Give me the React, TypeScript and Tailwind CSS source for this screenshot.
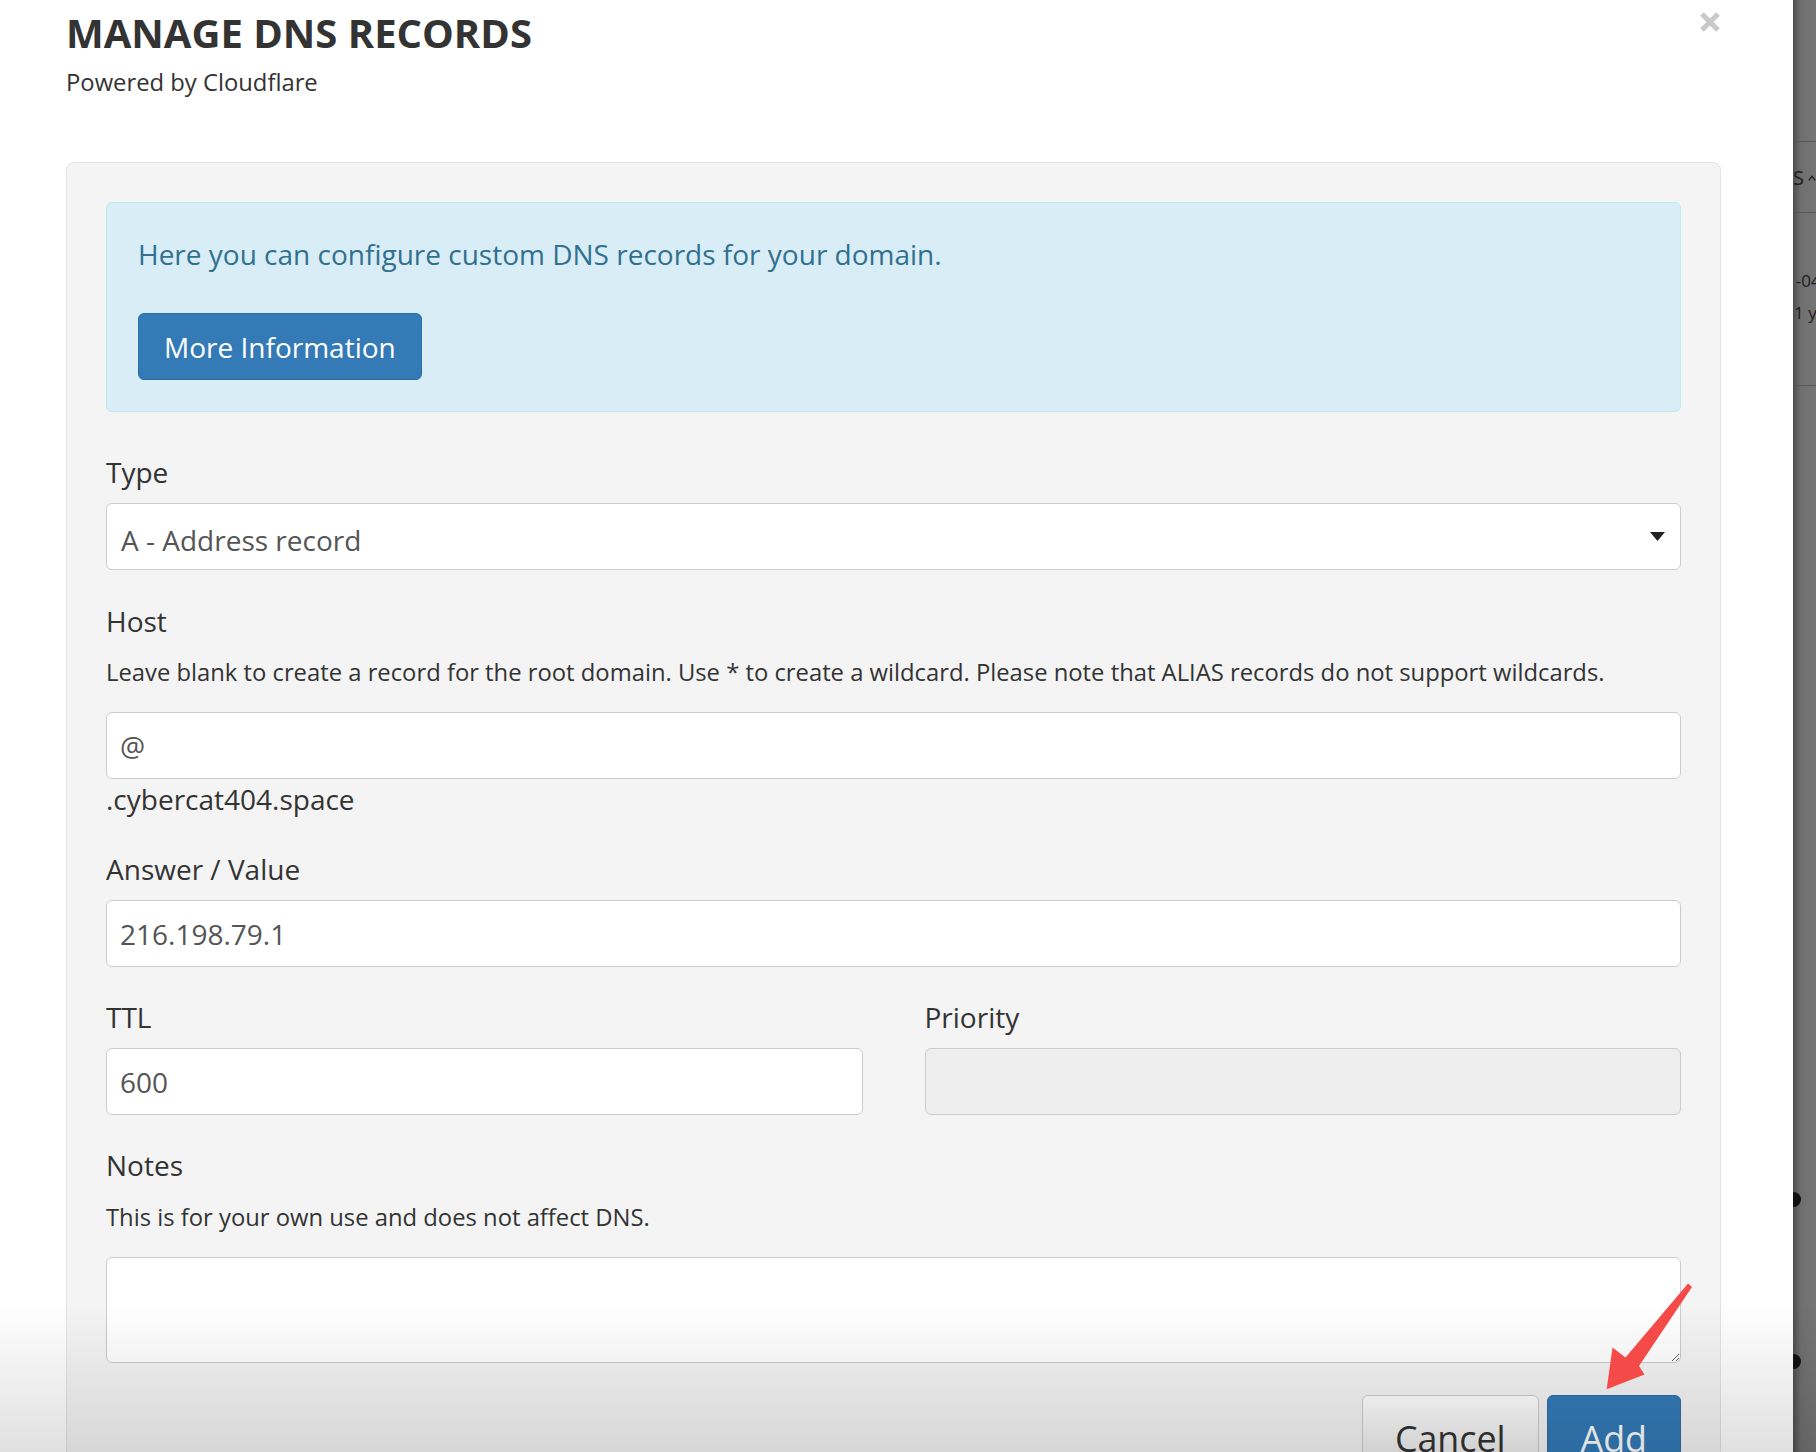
import React from "react";

function Label({ children, className = "" }: { children: React.ReactNode; className?: string }) {
  return <div className={`text-[28px] leading-[40px] text-[#333] ${className}`}>{children}</div>;
}

function Help({ children, className = "" }: { children: React.ReactNode; className?: string }) {
  return <div className={`text-[23.8px] leading-[34px] text-[#333] ${className}`}>{children}</div>;
}

function TextInput({ value, className = "", disabled = false }: { value: string; className?: string; disabled?: boolean }) {
  return (
    <input
      readOnly
      disabled={disabled}
      defaultValue={value}
      className={`block h-[67px] w-full rounded-[6px] border border-[#ccc] px-[13px] text-[28px] text-[#555] outline-none ${
        disabled ? "bg-[#eee]" : "bg-white"
      } ${className}`}
    />
  );
}

export default function App() {
  return (
    <div className="relative flex h-[1452px] w-[1816px] overflow-hidden bg-white font-['Open_Sans',sans-serif] text-[#333]">
      {/* Modal */}
      <div className="w-[1793px] shrink-0 bg-white pl-[66px] pr-[72px]">
        <header className="flex items-start justify-between">
          <div className="pt-[10px]">
            <h1 className="text-[40px] font-bold uppercase leading-[45px] text-[#333]">Manage DNS Records</h1>
            <p className="mt-[11px] text-[23.8px] leading-[33px] text-[#333]">Powered by Cloudflare</p>
          </div>
          <svg className="mr-[1px] mt-[12px]" width="20" height="20" viewBox="0 0 20 20">
            <path d="M2 2 L18 18 M18 2 L2 18" stroke="#c9c9c9" strokeWidth="5" strokeLinecap="butt" />
          </svg>
        </header>

        <div className="mt-[63px] rounded-[8px] border border-[#e3e3e3] bg-[#f4f4f4] px-[39px] pb-[40px] pt-[39px]">
          {/* Info alert */}
          <div className="rounded-[6px] border border-[#bce8f1] bg-[#d9edf7] px-[31px] pb-[31px] pt-[31px]">
            <p className="text-[28px] leading-[40px] text-[#31708f]">
              Here you can configure custom DNS records for your domain.
            </p>
            <button className="mt-[39px] h-[67px] rounded-[6px] border border-[#2e6da4] bg-[#337ab7] px-[25px] text-[28px] text-white">
              More Information
            </button>
          </div>

          {/* Type */}
          <Label className="mt-[40px]">Type</Label>
          <div className="mt-[11px] flex h-[67px] items-center justify-between rounded-[6px] border border-[#ccc] bg-white pl-[14px] pr-[15px]">
            <span className="pt-[7px] text-[28px] text-[#555]">A - Address record</span>
            <svg width="15" height="9" viewBox="0 0 15 9">
              <path d="M0 0 H15 L7.5 9 Z" fill="#222" />
            </svg>
          </div>

          {/* Host */}
          <Label className="mt-[31px]">Host</Label>
          <Help className="mt-[14px]">
            Leave blank to create a record for the root domain. Use * to create a wildcard. Please note that ALIAS records do not support wildcards.
          </Help>
          <TextInput value="@" className="mt-[23px]" />
          <Label>.cybercat404.space</Label>

          {/* Answer */}
          <Label className="mt-[30px]">Answer / Value</Label>
          <TextInput value="216.198.79.1" className="mt-[11px]" />

          {/* TTL / Priority */}
          <div className="mt-[30px] grid grid-cols-2 gap-x-[62px]">
            <div>
              <Label>TTL</Label>
              <TextInput value="600" className="mt-[11px]" />
            </div>
            <div>
              <Label>Priority</Label>
              <TextInput value="" disabled className="mt-[11px]" />
            </div>
          </div>

          {/* Notes */}
          <Label className="mt-[30px]">Notes</Label>
          <Help className="mt-[15px]">This is for your own use and does not affect DNS.</Help>
          <textarea
            readOnly
            className="mt-[23px] block h-[106px] w-full rounded-[6px] border border-[#ccc] bg-white px-[13px] text-[28px] text-[#555] outline-none"
          />

          {/* Buttons */}
          <div className="mt-[32px] flex justify-end gap-[8px]">
            <button className="rounded-[6px] border border-[#ccc] bg-linear-to-b from-white to-[#e6e6e6] px-[32px] py-[19px] text-[35.8px] leading-[47px] text-[#333]">
              Cancel
            </button>
            <button className="rounded-[6px] border border-[#2e6da4] bg-[#337ab7] px-[33px] py-[19px] text-[35.8px] leading-[47px] text-white">
              Add
            </button>
          </div>
        </div>
      </div>

      {/* Page behind the overlay */}
      <div className="w-[23px] shrink-0 overflow-hidden bg-[linear-gradient(to_right,#4e4e4e,#6f6f6f_8px,#767676)] text-[#1c1c1c]">
        <div className="h-[141px]" />
        <div className="h-[71px] border-t border-[#575757]">
          <div className="mt-[22px] flex items-center gap-[4px] whitespace-nowrap text-[20px] leading-[28px]">
            <span>S</span>
            <svg width="10" height="8" viewBox="0 0 10 8">
              <path d="M1 7 L5 2 L9 7" stroke="#1c1c1c" strokeWidth="1.8" fill="none" />
            </svg>
          </div>
        </div>
        <div className="h-[173px] border-t border-[#575757]">
          <div className="ml-[-7px] mt-[56px] whitespace-nowrap text-[17px] leading-[24px]">1-04</div>
          <div className="ml-[1px] mt-[8px] whitespace-nowrap text-[17px] leading-[24px]">1 yr</div>
        </div>
        <div className="border-t border-[#575757]" />
        <div className="ml-[-7px] mt-[806px] h-[15px] w-[15px] rounded-full bg-[#111]" />
        <div className="ml-[-7px] mt-[147px] h-[15px] w-[15px] rounded-full bg-[#111]" />
      </div>

      {/* Bottom fade */}
      <div className="pointer-events-none absolute bottom-0 left-0 h-[150px] w-[1816px] bg-linear-to-b from-[rgba(0,0,0,0)] to-[rgba(0,0,0,0.12)]" />

      {/* Annotation arrow */}
      <svg className="pointer-events-none absolute left-0 top-0" width="1816" height="1452" viewBox="0 0 1816 1452">
        <polygon
          points="1606.7,1389.3 1612.5,1347.5 1625.5,1357.5 1688,1283.5 1692,1287 1639,1366 1644.5,1374.5"
          fill="#f44b49"
        />
      </svg>
    </div>
  );
}
